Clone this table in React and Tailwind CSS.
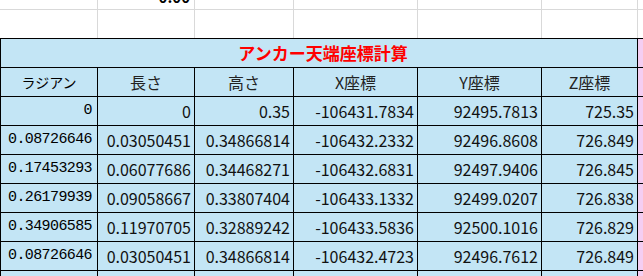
import React from 'react';

const gothic = { fontFamily: '"Noto Sans CJK JP", "Noto Sans", sans-serif' };

const rows = [
  ['0', '0', '0.35', '-106431.7834', '92495.7813', '725.35'],
  ['0.08726646', '0.03050451', '0.34866814', '-106432.2332', '92496.8608', '726.849'],
  ['0.17453293', '0.06077686', '0.34468271', '-106432.6831', '92497.9406', '726.845'],
  ['0.26179939', '0.09058667', '0.33807404', '-106433.1332', '92499.0207', '726.838'],
  ['0.34906585', '0.11970705', '0.32889242', '-106433.5836', '92500.1016', '726.829'],
  ['0.08726646', '0.03050451', '0.34866814', '-106432.4723', '92496.7612', '726.849'],
];

const headers = ['長さ', '高さ', 'X座標', 'Y座標', 'Z座標'];

export default function App() {
  return (
    <div className="w-[643px] h-[276px] overflow-hidden bg-white text-black">
      {/* sheet grid above the table */}
      <div className="grid grid-cols-[97px_96px_98px_123px_123px_95px_60px] grid-rows-[9px_28px] gap-px bg-[#d9d9d9] w-[700px]">
        <div className="bg-white" />
        <div className="bg-white overflow-hidden flex justify-end pr-[4px]">
          <span className="font-bold text-[15px] leading-none -mt-[11px]" style={gothic}>0.00</span>
        </div>
        {Array.from({ length: 12 }).map((_, i) => (
          <div key={i} className="bg-white" />
        ))}
      </div>

      {/* table */}
      <div className="grid grid-cols-[96px_96px_98px_123px_123px_95px_60px] auto-rows-[28px] gap-px bg-black p-px w-[700px]">
        <div className="col-span-6 bg-[#c3e5f5] flex items-center justify-center">
          <span className="text-[#ff0000] font-bold text-[17px] pl-[8px]" style={gothic}>アンカー天端座標計算</span>
        </div>
        <div className="bg-[#f4cef2]" />

        <div className="bg-[#c3e5f5] flex items-center justify-center">
          <span className="text-[14px] text-black" style={gothic}>ラジアン</span>
        </div>
        {headers.map((h) => (
          <div key={h} className="bg-[#c3e5f5] flex items-center justify-center">
            <span className="text-[16px] text-[#222]" style={gothic}>{h}</span>
          </div>
        ))}
        <div className="bg-[#f4cef2]" />

        {rows.map((r, i) => (
          <React.Fragment key={i}>
            <div className="bg-[#c3e5f5] flex items-center justify-end pr-[5px]">
              <span className="text-[15px] tracking-[-0.6px]" style={{ fontFamily: '"Liberation Mono", monospace' }}>{r[0]}</span>
            </div>
            {r.slice(1).map((v, j) => (
              <div key={j} className="bg-[#c3e5f5] flex items-center justify-end pr-[3px]">
                <span className="text-[16px] text-[#111]" style={gothic}>{v}</span>
              </div>
            ))}
            <div className="bg-[#f4cef2]" />
          </React.Fragment>
        ))}
        {Array.from({ length: 6 }).map((_, i) => (
          <div key={'e' + i} className="bg-[#c3e5f5]" />
        ))}
        <div className="bg-[#f4cef2]" />
      </div>
    </div>
  );
}
